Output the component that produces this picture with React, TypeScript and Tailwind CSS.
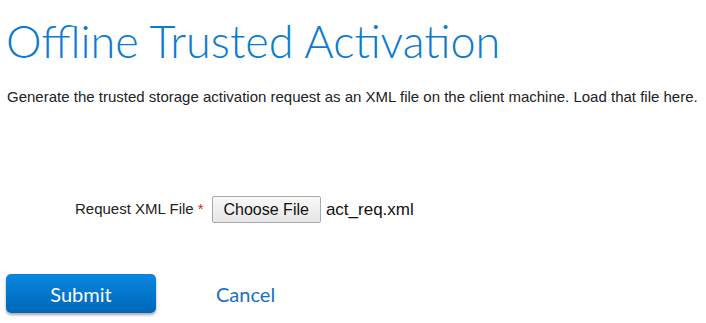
export default function App() {
  return (
    <div className="w-[706px] h-[323px] bg-white overflow-hidden font-['Liberation_Sans',Arial,sans-serif]">
      <h1 className="pl-[6px] pt-[13px] text-[45px] leading-[56px] font-light text-[#0b7bd1] font-['Lato',sans-serif]">
        Offline Trusted Activation
      </h1>
      <p className="pl-[7px] mt-[19px] text-[15px] leading-[18px] text-[#222]">
        Generate the trusted storage activation request as an XML file on the client machine. Load that file here.
      </p>
      <div className="flex items-center mt-[90px] pl-[75px] h-[27px]">
        <span className="text-[15px] text-[#222]">Request XML File</span>
        <span className="text-[15px] text-[#e02020] ml-[4px]">*</span>
        <button className="ml-[8px] h-[27px] px-[11px] text-[16px] text-[#111] bg-gradient-to-b from-[#f8f8f8] to-[#e6e6e6] border border-[#a9a9a9] rounded-[2px]">
          Choose File
        </button>
        <span className="ml-[5px] text-[17px] text-[#111]">act_req.xml</span>
      </div>
      <div className="flex items-center mt-[51px] pl-[6px] font-['Lato',sans-serif]">
        <button className="w-[150px] h-[39px] rounded-[5px] text-white text-[20px] bg-gradient-to-b from-[#0a87e0] to-[#0067b8] shadow-[0_2px_3px_rgba(0,0,0,0.35)]">
          Submit
        </button>
        <span className="ml-[60px] text-[20px] text-[#1a6fc0]">Cancel</span>
      </div>
    </div>
  );
}
